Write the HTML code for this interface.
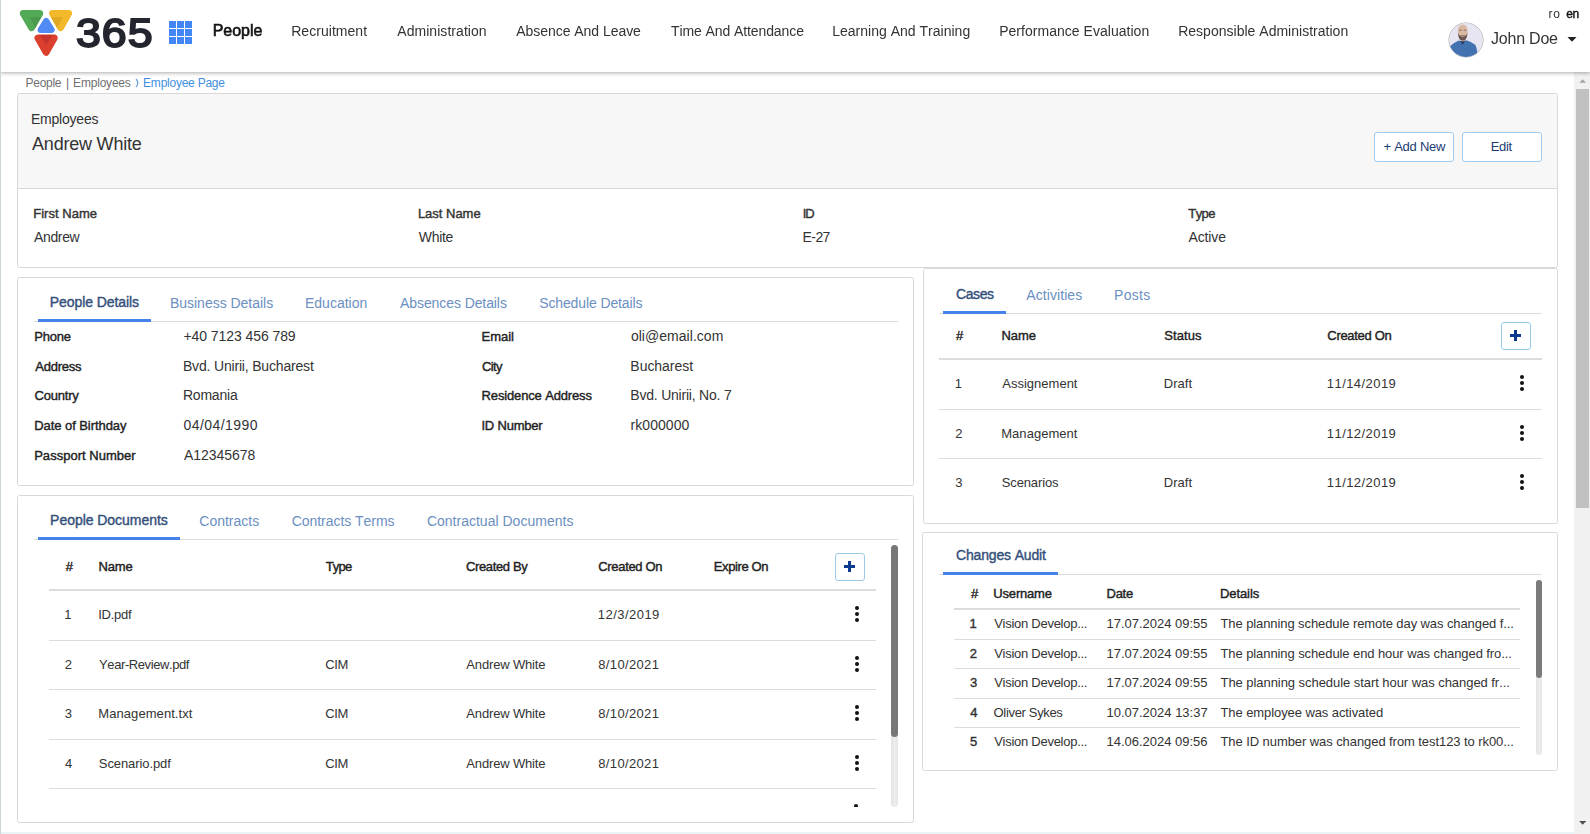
<!DOCTYPE html><html lang="en"><head><meta charset="utf-8"><title>Employee Page</title><style>
*{box-sizing:border-box;margin:0;padding:0}
html,body{width:1590px;height:834px;overflow:hidden;background:#fff}
body{font-family:"Liberation Sans",sans-serif;font-size:14px;color:#333;position:relative}
.t{position:absolute;line-height:20px;white-space:nowrap;font-weight:normal;text-decoration:none;font-kerning:none}
.abs{position:absolute}
#hdr{position:absolute;left:0;top:0;width:1590px;height:72px;background:#fff;will-change:transform;box-shadow:0 1px 4px rgba(0,0,0,.33);z-index:5}
.card{position:absolute;background:#fff;border:1px solid #d8d8d8;border-radius:2.5px}
.ul{position:absolute;height:3px;background:#4583ea}
.hl{position:absolute;height:1px;background:#dcdcdc}
.hl2{position:absolute;height:2px;background:#dcdcdc}
.btn{position:absolute;border:1px solid #9ccaf0;border-radius:3px;background:#fff}
.plus{position:absolute;width:30px;height:28px;border:1px solid #9ccbea;border-radius:3px;background:#fff}
.plus i{position:absolute;background:#0b3a8f}
.kb{position:absolute;width:4px}
.kb i{position:absolute;left:0;width:4px;height:4px;border-radius:50%;background:#111}
</style></head><body>
<header id="hdr">
<svg class="abs" style="left:17px;top:8px" width="58" height="52" viewBox="0 0 58 52">
<g stroke-linejoin="round" stroke-width="7">
<path d="M6.4 5.4 H22.7 L14.55 19.6Z" fill="#52a956" stroke="#52a956"/>
<path d="M35.6 5.4 H51.6 L43.6 19.6Z" fill="#f2b92a" stroke="#f2b92a"/>
<path d="M21 30.1 H37.2 L29.1 44.3Z" fill="#db3f2e" stroke="#db3f2e"/>
<path d="M29.15 12.9 L34.7 21.9 H23.6Z" fill="#4f8af5" stroke="#4f8af5" stroke-width="6"/>
</g>
<path d="M13 8.9 H24 L18.2 20.2Z" fill="#4a9a4e"/>
<path d="M34.2 9.2 H45.7 L40.2 20.2Z" fill="#dea724"/>
<path d="M22.7 27 H35.6 L29.1 37Z" fill="#c5352b"/>
</svg>
<span class="abs" style="left:76.3px;top:9px;font-size:41px;line-height:48px;color:#23262e;-webkit-text-stroke:1.9px #23262e;letter-spacing:0.9px;white-space:nowrap;transform:scaleX(1.09);transform-origin:0 0">365</span>
<svg class="abs" style="left:169px;top:21px" width="23" height="23" viewBox="0 0 23 23"><rect x="0" y="0" width="7" height="7" fill="#4285f4"/><rect x="8" y="0" width="7" height="7" fill="#4285f4"/><rect x="16" y="0" width="7" height="7" fill="#4285f4"/><rect x="0" y="8" width="7" height="7" fill="#4285f4"/><rect x="8" y="8" width="7" height="7" fill="#4285f4"/><rect x="16" y="8" width="7" height="7" fill="#4285f4"/><rect x="0" y="16" width="7" height="7" fill="#4285f4"/><rect x="8" y="16" width="7" height="7" fill="#4285f4"/><rect x="16" y="16" width="7" height="7" fill="#4285f4"/></svg>
<span class="t" style="left:212.64px;top:21.4px;font-size:16px;color:#111;letter-spacing:-0.009px;-webkit-text-stroke:0.6px #111;">People</span>
<nav>
<a class="t" style="left:291.15px;top:21px;font-size:14px;color:#333;letter-spacing:0.048px;">Recruitment</a>
<a class="t" style="left:397.27px;top:21px;font-size:14px;color:#333;letter-spacing:0.049px;">Administration</a>
<a class="t" style="left:516.27px;top:21px;font-size:14px;color:#333;letter-spacing:-0.042px;">Absence And Leave</a>
<a class="t" style="left:670.99px;top:21px;font-size:14px;color:#333;letter-spacing:-0.094px;">Time And Attendance</a>
<a class="t" style="left:832.15px;top:21px;font-size:14px;color:#333;letter-spacing:0.015px;">Learning And Training</a>
<a class="t" style="left:999.15px;top:21px;font-size:14px;color:#333;letter-spacing:0.031px;">Performance Evaluation</a>
<a class="t" style="left:1178.15px;top:21px;font-size:14px;color:#333;letter-spacing:0.017px;">Responsible Administration</a>
</nav>
<span class="t" style="left:1548.50px;top:3.8px;font-size:12px;color:#333;letter-spacing:0.631px;">ro</span>
<span class="t" style="left:1566.14px;top:3.8px;font-size:12px;color:#111;letter-spacing:-0.209px;-webkit-text-stroke:0.4px #111;">en</span>
<svg class="abs" style="left:1447.5px;top:21.5px" width="36" height="36" viewBox="0 0 36 36">
<defs><clipPath id="av"><circle cx="18" cy="18" r="16.9"/></clipPath></defs>
<circle cx="18" cy="18" r="17" fill="#e6e4f0" stroke="#a2a2a2" stroke-width="0.9"/>
<g clip-path="url(#av)">
<rect x="0" y="0" width="36" height="36" fill="#e7e5f1"/>
<path d="M1 25 Q6 20.5 10.8 18.6 L14.6 20.8 L18.4 18.2 Q24 20 27.2 22.8 Q29.6 27 29.4 36 H0Z" fill="#4272b0"/>
<path d="M11.6 18.4 L14.6 22.6 L17.6 18.2 L14.6 19.6Z" fill="#27324d"/>
<ellipse cx="14.7" cy="9" rx="5" ry="6.6" fill="#dcb9a3"/>
<path d="M9.9 10.5 Q10.2 18.6 14.7 18.8 Q19.2 18.6 19.5 10.5 Q18.6 13.6 17 13.8 Q14.7 12.8 12.4 13.8 Q10.8 13.6 9.9 10.5Z" fill="#6a5650"/>
<path d="M12.6 14.4 Q14.7 13.6 16.8 14.4 Q14.7 15.6 12.6 14.4Z" fill="#c79a88"/>
<path d="M11.2 8.2 H13.8 M15.6 8.2 H18.2" stroke="#6a5650" stroke-width="0.8"/>
</g></svg>
<span class="t" style="left:1491.05px;top:29px;font-size:16px;color:#333;letter-spacing:-0.219px;">John Doe</span>
<svg class="abs" style="left:1567px;top:37px" width="10" height="5" viewBox="0 0 10 5"><path d="M0.5 0 H9.5 L5 4.8Z" fill="#222"/></svg>
</header>
<div class="abs" style="left:0;top:0;width:1px;height:834px;background:#cdd6d9;z-index:6"></div>
<div class="abs" style="left:0;top:832px;width:1574px;height:2px;background:#e9f3f5"></div>
<div class="abs" style="left:1574px;top:72px;width:16px;height:762px;background:#f1f1f1"></div>
<div class="abs" style="left:1576px;top:89px;width:13px;height:419px;background:#c1c1c1"></div>
<svg class="abs" style="left:1578.7px;top:79.2px" width="7.4" height="3.8" viewBox="0 0 9 5"><path d="M0 5 L4.5 0.3 L9 5Z" fill="#a3a3a3"/></svg>
<svg class="abs" style="left:1578.9px;top:821px" width="7.4" height="4" viewBox="0 0 9 5"><path d="M0 0 L4.5 4.7 L9 0Z" fill="#505050"/></svg>
<main>
<span class="t" style="left:25.52px;top:73px;font-size:12px;color:#707070;letter-spacing:-0.270px;">People</span>
<span class="t" style="left:66.03px;top:73px;font-size:12px;color:#707070;letter-spacing:0.000px;">|</span>
<span class="t" style="left:73.12px;top:73px;font-size:12px;color:#707070;letter-spacing:-0.205px;">Employees</span>
<svg class="abs" style="left:134.5px;top:78px" width="5" height="10" viewBox="0 0 5 10"><path d="M1 0.8 Q4.6 5 1 9.2" fill="none" stroke="#5b96e0" stroke-width="1.1"/></svg>
<span class="t" style="left:143.12px;top:73px;font-size:12px;color:#3f8fe0;letter-spacing:-0.242px;">Employee Page</span>
<section class="card" style="left:17px;top:93px;width:1541px;height:175px"></section>
<div class="abs" style="left:18px;top:94px;width:1539px;height:94.5px;background:#f7f7f7;border-bottom:1px solid #d9d9d9;border-radius:3px 3px 0 0"></div>
<span class="t" style="left:30.95px;top:109px;font-size:14px;color:#333;letter-spacing:-0.213px;">Employees</span>
<h1 class="t" style="left:32.06px;top:134px;font-size:18px;color:#333;letter-spacing:-0.210px;">Andrew White</h1>
<div class="btn" style="left:1374px;top:132px;width:80px;height:30px"></div>
<div class="btn" style="left:1462px;top:132px;width:80px;height:30px"></div>
<span class="t" style="left:1383.47px;top:137px;font-size:13px;color:#1c3d73;letter-spacing:-0.256px;">+ Add New</span>
<span class="t" style="left:1490.73px;top:137px;font-size:13px;color:#1c3d73;letter-spacing:-0.346px;">Edit</span>
<span class="t" style="left:33.18px;top:203.7px;font-size:13px;color:#333;letter-spacing:0.037px;-webkit-text-stroke:0.4px #333;">First Name</span>
<span class="t" style="left:34.07px;top:227px;font-size:14px;color:#333;letter-spacing:-0.375px;">Andrew</span>
<span class="t" style="left:417.88px;top:203.7px;font-size:13px;color:#333;letter-spacing:-0.008px;-webkit-text-stroke:0.4px #333;">Last Name</span>
<span class="t" style="left:418.74px;top:227px;font-size:14px;color:#333;letter-spacing:-0.301px;">White</span>
<span class="t" style="left:802.65px;top:203.7px;font-size:13px;color:#333;letter-spacing:-0.928px;-webkit-text-stroke:0.4px #333;">ID</span>
<span class="t" style="left:802.55px;top:227px;font-size:14px;color:#333;letter-spacing:-0.573px;">E-27</span>
<span class="t" style="left:1188.36px;top:203.7px;font-size:13px;color:#333;letter-spacing:-0.627px;-webkit-text-stroke:0.4px #333;">Type</span>
<span class="t" style="left:1188.47px;top:227px;font-size:14px;color:#333;letter-spacing:-0.115px;">Active</span>
<section class="card" style="left:17px;top:277px;width:897px;height:209px"></section>
<span class="t" style="left:49.80px;top:292px;font-size:14px;color:#34507a;letter-spacing:-0.075px;-webkit-text-stroke:0.4px #34507a;">People Details</span>
<span class="t" style="left:169.95px;top:293px;font-size:14px;color:#6b8fc2;letter-spacing:-0.016px;">Business Details</span>
<span class="t" style="left:304.95px;top:293px;font-size:14px;color:#6b8fc2;letter-spacing:0.011px;">Education</span>
<span class="t" style="left:400.07px;top:293px;font-size:14px;color:#6b8fc2;letter-spacing:-0.089px;">Absences Details</span>
<span class="t" style="left:539.16px;top:293px;font-size:14px;color:#6b8fc2;letter-spacing:-0.115px;">Schedule Details</span>
<div class="hl" style="left:34px;top:321px;width:864px"></div>
<div class="ul" style="left:38px;top:319px;width:113px"></div>
<span class="t" style="left:34.18px;top:327px;font-size:13px;color:#222;letter-spacing:-0.174px;-webkit-text-stroke:0.4px #222;">Phone</span>
<span class="t" style="left:183.42px;top:326px;font-size:14px;color:#333;letter-spacing:-0.069px;">+40 7123 456 789</span>
<span class="t" style="left:481.58px;top:327px;font-size:13px;color:#222;letter-spacing:-0.030px;-webkit-text-stroke:0.4px #222;">Email</span>
<span class="t" style="left:630.91px;top:326px;font-size:14px;color:#333;letter-spacing:0.033px;">oli@email.com</span>
<span class="t" style="left:35.22px;top:357px;font-size:13px;color:#222;letter-spacing:-0.224px;-webkit-text-stroke:0.4px #222;">Address</span>
<span class="t" style="left:182.95px;top:356px;font-size:14px;color:#333;letter-spacing:-0.179px;">Bvd. Unirii, Bucharest</span>
<span class="t" style="left:481.99px;top:357px;font-size:13px;color:#222;letter-spacing:-0.618px;-webkit-text-stroke:0.4px #222;">City</span>
<span class="t" style="left:630.35px;top:356px;font-size:14px;color:#333;letter-spacing:-0.035px;">Bucharest</span>
<span class="t" style="left:34.59px;top:386px;font-size:13px;color:#222;letter-spacing:-0.214px;-webkit-text-stroke:0.4px #222;">Country</span>
<span class="t" style="left:182.95px;top:385px;font-size:14px;color:#333;letter-spacing:-0.213px;">Romania</span>
<span class="t" style="left:481.58px;top:386px;font-size:13px;color:#222;letter-spacing:-0.146px;-webkit-text-stroke:0.4px #222;">Residence Address</span>
<span class="t" style="left:630.35px;top:385px;font-size:14px;color:#333;letter-spacing:-0.217px;">Bvd. Unirii, No. 7</span>
<span class="t" style="left:34.18px;top:416px;font-size:13px;color:#222;letter-spacing:-0.058px;-webkit-text-stroke:0.4px #222;">Date of Birthday</span>
<span class="t" style="left:183.55px;top:415px;font-size:14px;color:#333;letter-spacing:0.436px;">04/04/1990</span>
<span class="t" style="left:481.45px;top:416px;font-size:13px;color:#222;letter-spacing:-0.198px;-webkit-text-stroke:0.4px #222;">ID Number</span>
<span class="t" style="left:630.57px;top:415px;font-size:14px;color:#333;letter-spacing:0.043px;">rk000000</span>
<span class="t" style="left:34.18px;top:446px;font-size:13px;color:#222;letter-spacing:0.027px;-webkit-text-stroke:0.4px #222;">Passport Number</span>
<span class="t" style="left:184.07px;top:445px;font-size:14px;color:#333;letter-spacing:-0.049px;">A12345678</span>
<section class="card" style="left:17px;top:495px;width:897px;height:328px"></section>
<span class="t" style="left:50.10px;top:510px;font-size:14px;color:#34507a;letter-spacing:-0.039px;-webkit-text-stroke:0.4px #34507a;">People Documents</span>
<span class="t" style="left:199.29px;top:511px;font-size:14px;color:#6b8fc2;letter-spacing:0.001px;">Contracts</span>
<span class="t" style="left:291.69px;top:511px;font-size:14px;color:#6b8fc2;letter-spacing:-0.046px;">Contracts Terms</span>
<span class="t" style="left:426.89px;top:511px;font-size:14px;color:#6b8fc2;letter-spacing:0.011px;">Contractual Documents</span>
<div class="hl" style="left:34px;top:539px;width:864px"></div>
<div class="ul" style="left:38px;top:537px;width:142px"></div>
<span class="t" style="left:65.69px;top:557px;font-size:13px;color:#222;letter-spacing:0.000px;-webkit-text-stroke:0.4px #222;">#</span>
<span class="t" style="left:98.48px;top:557px;font-size:13px;color:#222;letter-spacing:-0.128px;-webkit-text-stroke:0.4px #222;">Name</span>
<span class="t" style="left:325.66px;top:557px;font-size:13px;color:#222;letter-spacing:-0.794px;-webkit-text-stroke:0.4px #222;">Type</span>
<span class="t" style="left:465.99px;top:557px;font-size:13px;color:#222;letter-spacing:-0.355px;-webkit-text-stroke:0.4px #222;">Created By</span>
<span class="t" style="left:598.29px;top:557px;font-size:13px;color:#222;letter-spacing:-0.328px;-webkit-text-stroke:0.4px #222;">Created On</span>
<span class="t" style="left:713.78px;top:557px;font-size:13px;color:#222;letter-spacing:-0.380px;-webkit-text-stroke:0.4px #222;">Expire On</span>
<div class="plus" style="left:835px;top:553px"><i style="left:8px;top:11px;width:11px;height:3px"></i><i style="left:12px;top:7px;width:3px;height:11px"></i></div>
<div class="hl2" style="left:49px;top:589px;width:827px"></div>
<span class="t" style="left:64.31px;top:605px;font-size:13px;color:#333;letter-spacing:0.000px;">1</span>
<span class="t" style="left:98.20px;top:605px;font-size:13px;color:#333;letter-spacing:-0.241px;">ID.pdf</span>
<span class="t" style="left:597.81px;top:605px;font-size:13px;color:#333;letter-spacing:0.459px;">12/3/2019</span>
<div class="kb" style="left:854.6px;top:606px;height:16px"><i style="top:0"></i><i style="top:6px"></i><i style="top:12px"></i></div>
<span class="t" style="left:64.65px;top:655px;font-size:13px;color:#333;letter-spacing:0.000px;">2</span>
<span class="t" style="left:99.11px;top:655px;font-size:13px;color:#333;letter-spacing:-0.416px;">Year-Review.pdf</span>
<span class="t" style="left:325.14px;top:655px;font-size:13px;color:#333;letter-spacing:-0.251px;">CIM</span>
<span class="t" style="left:466.37px;top:655px;font-size:13px;color:#333;letter-spacing:-0.165px;">Andrew White</span>
<span class="t" style="left:598.24px;top:655px;font-size:13px;color:#333;letter-spacing:0.358px;">8/10/2021</span>
<div class="kb" style="left:854.6px;top:656px;height:16px"><i style="top:0"></i><i style="top:6px"></i><i style="top:12px"></i></div>
<span class="t" style="left:64.80px;top:704px;font-size:13px;color:#333;letter-spacing:0.000px;">3</span>
<span class="t" style="left:98.33px;top:704px;font-size:13px;color:#333;letter-spacing:0.065px;">Management.txt</span>
<span class="t" style="left:325.14px;top:704px;font-size:13px;color:#333;letter-spacing:-0.251px;">CIM</span>
<span class="t" style="left:466.37px;top:704px;font-size:13px;color:#333;letter-spacing:-0.165px;">Andrew White</span>
<span class="t" style="left:598.24px;top:704px;font-size:13px;color:#333;letter-spacing:0.358px;">8/10/2021</span>
<div class="kb" style="left:854.6px;top:705px;height:16px"><i style="top:0"></i><i style="top:6px"></i><i style="top:12px"></i></div>
<span class="t" style="left:65.00px;top:754px;font-size:13px;color:#333;letter-spacing:0.000px;">4</span>
<span class="t" style="left:98.81px;top:754px;font-size:13px;color:#333;letter-spacing:-0.084px;">Scenario.pdf</span>
<span class="t" style="left:325.14px;top:754px;font-size:13px;color:#333;letter-spacing:-0.251px;">CIM</span>
<span class="t" style="left:466.37px;top:754px;font-size:13px;color:#333;letter-spacing:-0.165px;">Andrew White</span>
<span class="t" style="left:598.24px;top:754px;font-size:13px;color:#333;letter-spacing:0.358px;">8/10/2021</span>
<div class="kb" style="left:854.6px;top:755px;height:16px"><i style="top:0"></i><i style="top:6px"></i><i style="top:12px"></i></div>
<div class="hl" style="left:49px;top:640px;width:827px"></div>
<div class="hl" style="left:49px;top:689px;width:827px"></div>
<div class="hl" style="left:49px;top:739px;width:827px"></div>
<div class="hl" style="left:49px;top:788px;width:827px"></div>
<div class="kb" style="left:854.2px;top:804px;height:3px;overflow:hidden"><i style="top:0"></i></div>
<div class="abs" style="left:891px;top:545px;width:7px;height:262px;border-radius:4px;background:linear-gradient(to right,#e3e3e3,#ededed 50%,#e6e6e6)"></div>
<div class="abs" style="left:891px;top:545px;width:7px;height:192px;border-radius:4px;background:#777"></div>
<section class="card" style="left:923px;top:268px;width:635px;height:256px"></section>
<span class="t" style="left:956.04px;top:284px;font-size:14px;color:#34507a;letter-spacing:-0.404px;-webkit-text-stroke:0.4px #34507a;">Cases</span>
<span class="t" style="left:1026.27px;top:285px;font-size:14px;color:#6b8fc2;letter-spacing:0.078px;">Activities</span>
<span class="t" style="left:1114.05px;top:285px;font-size:14px;color:#6b8fc2;letter-spacing:0.285px;">Posts</span>
<div class="hl" style="left:939px;top:313px;width:603px"></div>
<div class="ul" style="left:943px;top:311px;width:63px"></div>
<span class="t" style="left:955.89px;top:326px;font-size:13px;color:#222;letter-spacing:0.000px;-webkit-text-stroke:0.4px #222;">#</span>
<span class="t" style="left:1001.38px;top:326px;font-size:13px;color:#222;letter-spacing:0.006px;-webkit-text-stroke:0.4px #222;">Name</span>
<span class="t" style="left:1164.36px;top:326px;font-size:13px;color:#222;letter-spacing:0.071px;-webkit-text-stroke:0.4px #222;">Status</span>
<span class="t" style="left:1327.29px;top:326px;font-size:13px;color:#222;letter-spacing:-0.294px;-webkit-text-stroke:0.4px #222;">Created On</span>
<div class="plus" style="left:1501px;top:322px"><i style="left:8px;top:11px;width:11px;height:3px"></i><i style="left:12px;top:7px;width:3px;height:11px"></i></div>
<div class="hl2" style="left:939px;top:358px;width:603px"></div>
<span class="t" style="left:954.81px;top:374px;font-size:13px;color:#333;letter-spacing:0.000px;">1</span>
<span class="t" style="left:1002.27px;top:374px;font-size:13px;color:#333;letter-spacing:0.007px;">Assignement</span>
<span class="t" style="left:1163.73px;top:374px;font-size:13px;color:#333;letter-spacing:0.048px;">Draft</span>
<span class="t" style="left:1326.81px;top:374px;font-size:13px;color:#333;letter-spacing:0.438px;">11/14/2019</span>
<div class="kb" style="left:1520px;top:375px;height:16px"><i style="top:0"></i><i style="top:6px"></i><i style="top:12px"></i></div>
<span class="t" style="left:955.15px;top:424px;font-size:13px;color:#333;letter-spacing:0.000px;">2</span>
<span class="t" style="left:1001.23px;top:424px;font-size:13px;color:#333;letter-spacing:0.042px;">Management</span>
<span class="t" style="left:1326.81px;top:424px;font-size:13px;color:#333;letter-spacing:0.438px;">11/12/2019</span>
<div class="kb" style="left:1520px;top:425px;height:16px"><i style="top:0"></i><i style="top:6px"></i><i style="top:12px"></i></div>
<span class="t" style="left:955.30px;top:473px;font-size:13px;color:#333;letter-spacing:0.000px;">3</span>
<span class="t" style="left:1001.71px;top:473px;font-size:13px;color:#333;letter-spacing:-0.119px;">Scenarios</span>
<span class="t" style="left:1163.73px;top:473px;font-size:13px;color:#333;letter-spacing:0.048px;">Draft</span>
<span class="t" style="left:1326.81px;top:473px;font-size:13px;color:#333;letter-spacing:0.438px;">11/12/2019</span>
<div class="kb" style="left:1520px;top:474px;height:16px"><i style="top:0"></i><i style="top:6px"></i><i style="top:12px"></i></div>
<div class="hl" style="left:939px;top:409px;width:603px"></div>
<div class="hl" style="left:939px;top:458px;width:603px"></div>
<section class="card" style="left:922px;top:532px;width:636px;height:239px"></section>
<span class="t" style="left:956.04px;top:545px;font-size:14px;color:#34507a;letter-spacing:-0.165px;-webkit-text-stroke:0.4px #34507a;">Changes Audit</span>
<div class="hl" style="left:939px;top:574px;width:603px"></div>
<div class="ul" style="left:943px;top:572px;width:115px"></div>
<span class="t" style="left:970.89px;top:584px;font-size:13px;color:#222;letter-spacing:0.000px;-webkit-text-stroke:0.4px #222;">#</span>
<span class="t" style="left:993.35px;top:584px;font-size:13px;color:#222;letter-spacing:-0.191px;-webkit-text-stroke:0.4px #222;">Username</span>
<span class="t" style="left:1106.58px;top:584px;font-size:13px;color:#222;letter-spacing:-0.289px;-webkit-text-stroke:0.4px #222;">Date</span>
<span class="t" style="left:1219.88px;top:584px;font-size:13px;color:#222;letter-spacing:-0.058px;-webkit-text-stroke:0.4px #222;">Details</span>
<div class="hl2" style="left:954px;top:608px;width:566px"></div>
<span class="t" style="left:969.46px;top:614px;font-size:13px;color:#333;letter-spacing:0.000px;-webkit-text-stroke:0.4px #333;">1</span>
<span class="t" style="left:994.14px;top:614px;font-size:13px;color:#333;letter-spacing:-0.263px;">Vision Develop...</span>
<span class="t" style="left:1106.51px;top:614px;font-size:13px;color:#333;letter-spacing:-0.011px;">17.07.2024 09:55</span>
<span class="t" style="left:1220.51px;top:614px;font-size:13px;color:#333;letter-spacing:-0.091px;">The planning schedule remote day was changed f...</span>
<span class="t" style="left:969.80px;top:644px;font-size:13px;color:#333;letter-spacing:0.000px;-webkit-text-stroke:0.4px #333;">2</span>
<span class="t" style="left:994.14px;top:644px;font-size:13px;color:#333;letter-spacing:-0.263px;">Vision Develop...</span>
<span class="t" style="left:1106.51px;top:644px;font-size:13px;color:#333;letter-spacing:-0.011px;">17.07.2024 09:55</span>
<span class="t" style="left:1220.51px;top:644px;font-size:13px;color:#333;letter-spacing:-0.088px;">The planning schedule end hour was changed fro...</span>
<span class="t" style="left:969.95px;top:673px;font-size:13px;color:#333;letter-spacing:0.000px;-webkit-text-stroke:0.4px #333;">3</span>
<span class="t" style="left:994.14px;top:673px;font-size:13px;color:#333;letter-spacing:-0.263px;">Vision Develop...</span>
<span class="t" style="left:1106.51px;top:673px;font-size:13px;color:#333;letter-spacing:-0.011px;">17.07.2024 09:55</span>
<span class="t" style="left:1220.51px;top:673px;font-size:13px;color:#333;letter-spacing:-0.053px;">The planning schedule start hour was changed fr...</span>
<span class="t" style="left:970.15px;top:703px;font-size:13px;color:#333;letter-spacing:0.000px;-webkit-text-stroke:0.4px #333;">4</span>
<span class="t" style="left:993.58px;top:703px;font-size:13px;color:#333;letter-spacing:-0.334px;">Oliver Sykes</span>
<span class="t" style="left:1106.51px;top:703px;font-size:13px;color:#333;letter-spacing:-0.004px;">10.07.2024 13:37</span>
<span class="t" style="left:1220.51px;top:703px;font-size:13px;color:#333;letter-spacing:-0.085px;">The employee was activated</span>
<span class="t" style="left:969.93px;top:732px;font-size:13px;color:#333;letter-spacing:0.000px;-webkit-text-stroke:0.4px #333;">5</span>
<span class="t" style="left:994.14px;top:732px;font-size:13px;color:#333;letter-spacing:-0.263px;">Vision Develop...</span>
<span class="t" style="left:1106.51px;top:732px;font-size:13px;color:#333;letter-spacing:-0.010px;">14.06.2024 09:56</span>
<span class="t" style="left:1220.51px;top:732px;font-size:13px;color:#333;letter-spacing:-0.075px;">The ID number was changed from test123 to rk00...</span>
<div class="hl" style="left:954px;top:639px;width:566px"></div>
<div class="hl" style="left:954px;top:668px;width:566px"></div>
<div class="hl" style="left:954px;top:698px;width:566px"></div>
<div class="hl" style="left:954px;top:727px;width:566px"></div>
<div class="abs" style="left:1535.5px;top:580px;width:6px;height:174.5px;border-radius:3px;background:linear-gradient(to right,#e3e3e3,#ededed 50%,#e6e6e6)"></div>
<div class="abs" style="left:1535.5px;top:580px;width:6px;height:97.5px;border-radius:3px;background:#7b7b7b"></div>
</main></body></html>
